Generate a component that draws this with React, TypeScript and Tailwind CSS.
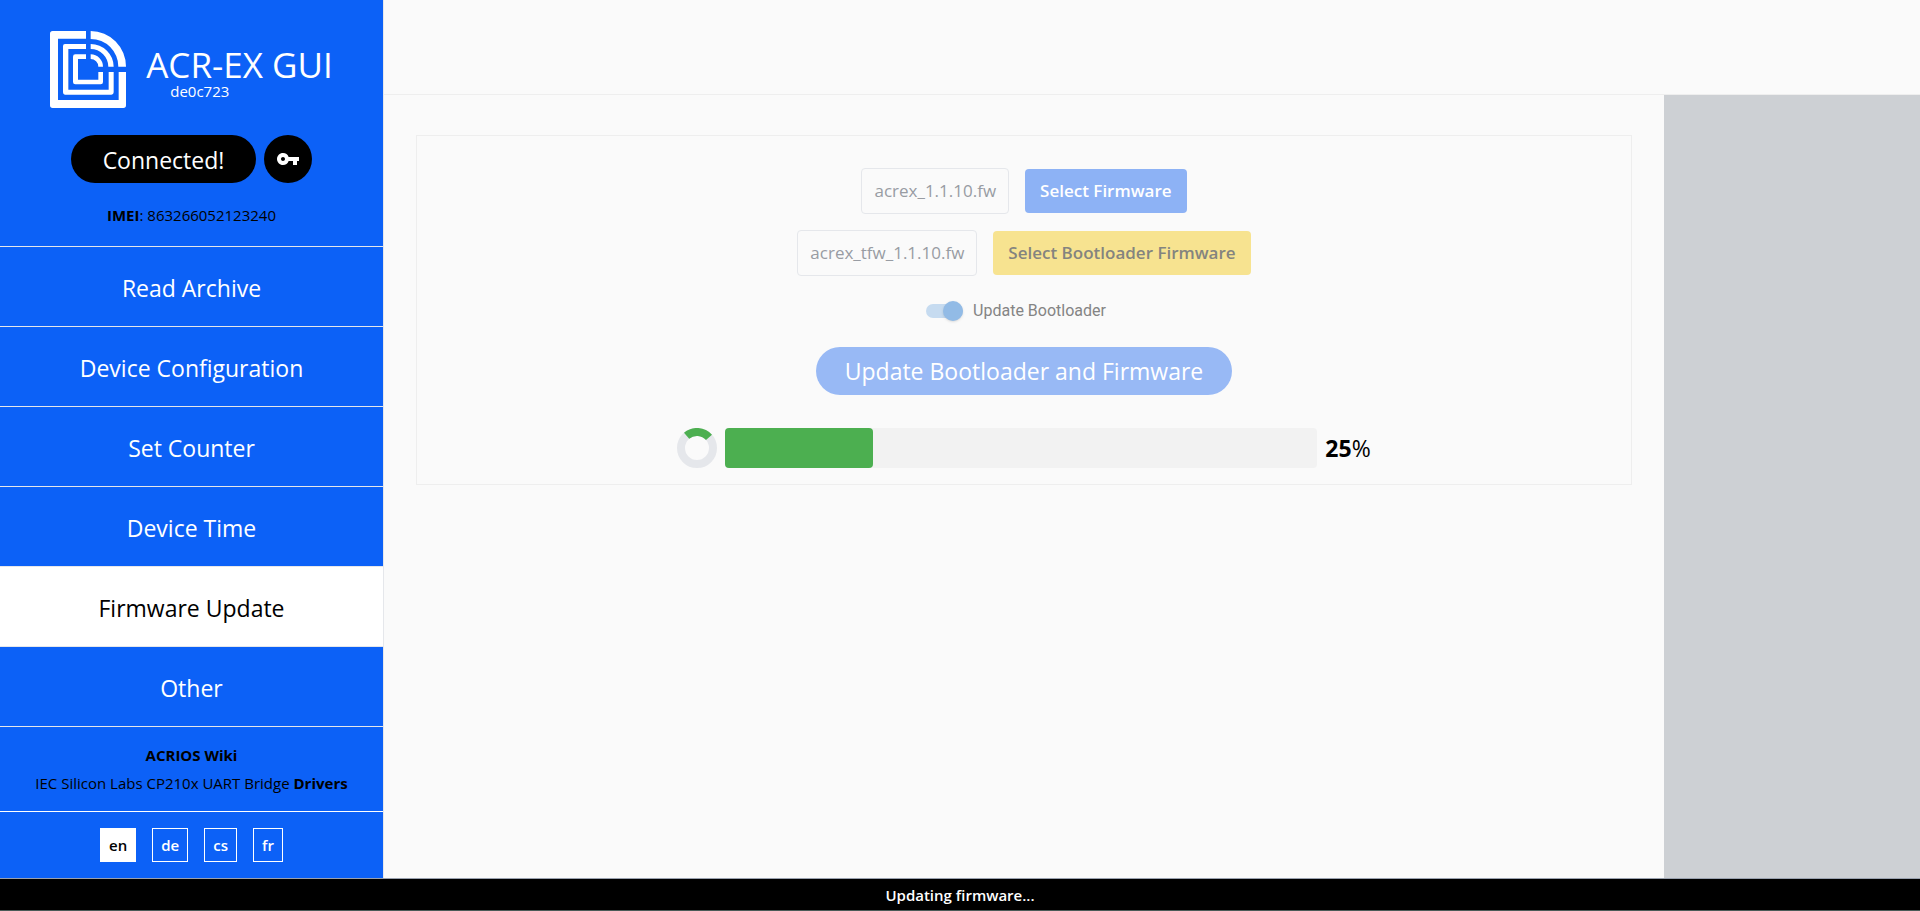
import { useState } from 'react';
import { MdVpnKey } from 'react-icons/md';

const NAV_ITEMS = [
    'Read Archive',
    'Device Configuration',
    'Set Counter',
    'Device Time',
    'Firmware Update',
    'Other',
];

const LANGUAGES = ['en', 'de', 'cs', 'fr'];

function Logo() {
    return (
        <svg viewBox="0 0 228 231" className="w-[76px] h-[77px] shrink-0" fill="#fff" aria-hidden="true">
            {/* outer ring */}
            <path d="M108 0H8Q0 0 0 8V223Q0 231 8 231H220Q228 231 228 223V123H206V207H24V23H108Z" />
            <path d="M122 0A106 107 0 0 1 228 107H205A83 83 0 0 0 122 24Z" />
            {/* middle ring */}
            <path d="M108 39H45Q39 39 39 45V184Q39 191 45 191H184Q191 191 191 184V123H176V176H55V54H108Z" />
            <path d="M122 39A69 68 0 0 1 191 107H175A53 53 0 0 0 122 54Z" />
            {/* inner ring */}
            <path d="M108 70H76Q69 70 69 77V153Q69 160 76 160H152Q159 160 159 153V123H145V146H84V84H108Z" />
            <path d="M122 70A37 37 0 0 1 159 107H145A23 23 0 0 0 122 84Z" />
        </svg>
    );
}

function Spinner() {
    return (
        <svg viewBox="0 0 40 40" className="w-10 h-10 shrink-0" fill="none" strokeWidth="8" aria-hidden="true">
            <circle cx="20" cy="20" r="16" stroke="#e5e7eb" />
            <path d="M9.6 7.8A16 16 0 0 1 32 9.4" stroke="#4caf50" />
        </svg>
    );
}

export default function App() {
    const [active, setActive] = useState('Firmware Update');
    const [lang, setLang] = useState('en');
    const [updateBootloader, setUpdateBootloader] = useState(true);
    const progress = 25;

    return (
        <div className="min-h-screen flex flex-col bg-[#fafafa] text-black font-['Open_Sans',sans-serif]">
            <div className="flex-1 flex">
                <aside className="w-1/5 flex flex-col bg-[#0c61f7] border-r border-gray-200">
                    <div className="flex flex-col items-center pt-[31px] pb-[19px] border-b border-gray-200">
                        <div className="flex items-center gap-5">
                            <Logo />
                            <div className="text-white pt-1.5">
                                <h1 className="text-[35px] leading-9">ACR-EX GUI</h1>
                                <p className="pl-6 text-[15px] leading-4">de0c723</p>
                            </div>
                        </div>
                        <div className="flex gap-2 mt-[27px]">
                            <button className="h-12 px-8 pt-0.5 rounded-full bg-black text-white text-[23px]">Connected!</button>
                            <button aria-label="Password" className="w-12 h-12 rounded-full bg-black text-white flex items-center justify-center">
                                <MdVpnKey className="w-6 h-6" />
                            </button>
                        </div>
                        <p className="mt-5 text-[15px] leading-6"><b>IMEI</b>: 863266052123240</p>
                    </div>

                    <nav className="flex flex-col">
                        {NAV_ITEMS.map((item) => (
                            <button
                                key={item}
                                onClick={() => setActive(item)}
                                className={`h-20 pt-1 border-b border-gray-200 text-[23px] ${active === item ? 'bg-white text-black' : 'text-white'}`}
                            >
                                {item}
                            </button>
                        ))}
                    </nav>

                    <div className="flex flex-col items-center gap-1 py-4 border-b border-white text-[15px] leading-6">
                        <a href="#wiki" className="font-bold">ACRIOS Wiki</a>
                        <p>IEC Silicon Labs CP210x UART Bridge <a href="#drivers" className="font-bold">Drivers</a></p>
                    </div>

                    <div className="flex justify-center gap-4 py-4">
                        {LANGUAGES.map((code) => (
                            <button
                                key={code}
                                onClick={() => setLang(code)}
                                className={`px-2 py-1 border border-white text-[15px] leading-6 font-semibold ${lang === code ? 'bg-white text-black' : 'text-white'}`}
                            >
                                {code}
                            </button>
                        ))}
                    </div>
                </aside>

                <div className="flex-1 flex flex-col">
                    <header className="h-[95px] border-b border-[#eeeeee]" />
                    <div className="flex-1 flex">
                        <main className="w-5/6 px-8 pt-10">
                            <section className="flex flex-col items-center border border-[#eeeeee] pt-8 pb-4">
                                <div className="flex items-center gap-4 text-[17px] leading-6">
                                    <div className="px-3 py-2.5 border border-gray-200 rounded text-[#989ca3]">acrex_1.1.10.fw</div>
                                    <button className="h-11 px-[15px] rounded bg-[#8db2f5] text-white font-semibold">Select Firmware</button>
                                </div>
                                <div className="flex items-center gap-4 mt-4 text-[17px] leading-6">
                                    <div className="px-3 py-2.5 border border-gray-200 rounded text-[#989ca3]">acrex_tfw_1.1.10.fw</div>
                                    <button className="h-11 px-[15px] rounded bg-[#f7e390] text-[#84847f] font-semibold">Select Bootloader Firmware</button>
                                </div>

                                <label className="flex items-center gap-2.5 mt-[23px] mr-4 font-[Roboto] leading-6 text-[#848484]">
                                    <input
                                        type="checkbox"
                                        checked={updateBootloader}
                                        onChange={(e) => setUpdateBootloader(e.target.checked)}
                                        className="peer sr-only"
                                    />
                                    <span className="flex items-center w-[37px] h-5 before:w-full before:h-3.5 before:rounded-full before:bg-[#c6dbf0] after:w-5 after:h-5 after:-ml-5 after:rounded-full after:bg-[#92bbe6] after:shrink-0 after:shadow-sm" />
                                    Update Bootloader
                                </label>

                                <button className="h-12 mt-6 px-[29px] rounded-full bg-[#98b9f5] text-white text-[23px]">
                                    Update Bootloader and Firmware
                                </button>

                                <div className="flex items-center gap-2 mt-[33px]">
                                    <Spinner />
                                    <div className="w-[592px] h-10 rounded bg-[#f2f2f2]">
                                        <div className="h-10 rounded bg-[#4caf50]" style={{ width: `${progress}%` }} />
                                    </div>
                                    <span className="text-[23px]"><b>{progress}</b>%</span>
                                </div>
                            </section>
                        </main>
                        <div className="flex-1 bg-[#cdd0d4]" />
                    </div>
                </div>
            </div>

            <footer className="h-[33px] border-t border-t-gray-400 border-b border-b-[#4b5b58] bg-black text-white text-center text-[15px] leading-8 font-semibold">
                Updating firmware...
            </footer>
        </div>
    );
}
